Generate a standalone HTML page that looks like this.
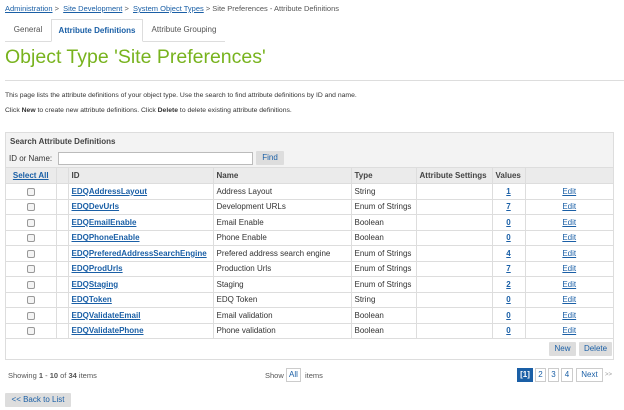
<!DOCTYPE html>
<html><head><meta charset="utf-8"><style>
*{margin:0;padding:0;box-sizing:border-box}
body{width:624px;height:410px;background:#fff;font-family:"Liberation Sans",Arial,sans-serif;font-size:8px;color:#333;position:relative;overflow:hidden}
a{color:#1a5fa6;text-decoration:underline}
.abs{position:absolute;white-space:nowrap}
.crumb{top:4px;left:5px;font-size:7.5px;color:#555}
.tab{position:absolute;top:19px;height:23px;line-height:22px;font-size:8px;color:#555;text-align:center}
.act{border:1px solid #ddd;border-bottom:1px solid #fff;font-weight:bold;color:#1a5fa6;background:#fff}
h1{position:absolute;left:5px;top:46px;font-size:19.5px;font-weight:normal;color:#78b31e;white-space:nowrap}
.box{position:absolute;left:5px;top:132px;width:609px;height:228px;border:1px solid #ddd;background:#fff}
table{border-collapse:collapse;position:absolute;left:0;top:34px;width:607px}
td,th{border:1px solid #ddd;height:15.5px;padding:0 3px;font-size:8px;text-align:left;white-space:nowrap}
th{background:#ebebeb;font-weight:bold;color:#444;height:16px}
tr td:first-child,tr th:first-child{border-left:none;text-align:center}
tr td:last-child,tr th:last-child{border-right:none;text-align:center}
td a{font-weight:bold}
.cb{display:inline-block;width:8px;height:8px;border:1px solid #999;border-radius:2px;background:#f4f4f4;vertical-align:middle}
.btn{position:absolute;background:#ddd;color:#1a5fa6;font-size:8px;text-align:center;border-radius:1px}
.pg{position:absolute;top:368px;height:14px;line-height:12px;border:1px solid #ccc;color:#1a5fa6;text-align:center;font-size:8px;background:#fff}
</style></head><body>
<div class="abs crumb"><a href="#">Administration</a> &gt; &nbsp;<a href="#">Site Development</a> &gt; &nbsp;<a href="#">System Object Types</a> &gt; Site Preferences - Attribute Definitions</div>
<div style="position:absolute;left:5px;top:41px;width:220px;height:1px;background:#ddd"></div>
<div class="tab" style="left:5px;width:46px">General</div>
<div class="tab act" style="left:51px;width:92px">Attribute Definitions</div>
<div class="tab" style="left:143px;width:82px">Attribute Grouping</div>
<h1>Object Type 'Site Preferences'</h1>
<div style="position:absolute;left:5px;top:80px;width:619px;height:1px;background:#ddd"></div>
<div class="abs" style="left:5px;top:92px;font-size:6.8px">This page lists the attribute definitions of your object type. Use the search to find attribute definitions by ID and name.</div>
<div class="abs" style="left:5px;top:107px;font-size:6.8px">Click <b>New</b> to create new attribute definitions. Click <b>Delete</b> to delete existing attribute definitions.</div>
<div class="box">
<div style="position:absolute;left:0;top:0;width:607px;height:34px;background:#f3f3f3"></div>
<div class="abs" style="left:4px;top:4px;font-weight:bold;color:#444">Search Attribute Definitions</div>
<div class="abs" style="left:3px;top:21px">ID or Name:</div>
<div style="position:absolute;left:52px;top:19px;width:195px;height:13px;border:1px solid #bbb;background:#fff"></div>
<div class="btn" style="left:250px;top:18px;width:28px;height:14px;line-height:14px">Find</div>
<table>
<tr><th style="width:50px"><a href="#">Select All</a></th><th style="width:12px"></th><th style="width:145px">ID</th><th style="width:138px">Name</th><th style="width:65px">Type</th><th style="width:76px">Attribute Settings</th><th style="width:33px">Values</th><th></th></tr>
<tr><td><span class="cb"></span></td><td></td><td><a href="#">EDQAddressLayout</a></td><td>Address Layout</td><td>String</td><td></td><td style="text-align:center"><a href="#">1</a></td><td><a href="#" style="font-weight:normal">Edit</a></td></tr>
<tr><td><span class="cb"></span></td><td></td><td><a href="#">EDQDevUrls</a></td><td>Development URLs</td><td>Enum of Strings</td><td></td><td style="text-align:center"><a href="#">7</a></td><td><a href="#" style="font-weight:normal">Edit</a></td></tr>
<tr><td><span class="cb"></span></td><td></td><td><a href="#">EDQEmailEnable</a></td><td>Email Enable</td><td>Boolean</td><td></td><td style="text-align:center"><a href="#">0</a></td><td><a href="#" style="font-weight:normal">Edit</a></td></tr>
<tr><td><span class="cb"></span></td><td></td><td><a href="#">EDQPhoneEnable</a></td><td>Phone Enable</td><td>Boolean</td><td></td><td style="text-align:center"><a href="#">0</a></td><td><a href="#" style="font-weight:normal">Edit</a></td></tr>
<tr><td><span class="cb"></span></td><td></td><td><a href="#">EDQPreferedAddressSearchEngine</a></td><td>Prefered address search engine</td><td>Enum of Strings</td><td></td><td style="text-align:center"><a href="#">4</a></td><td><a href="#" style="font-weight:normal">Edit</a></td></tr>
<tr><td><span class="cb"></span></td><td></td><td><a href="#">EDQProdUrls</a></td><td>Production Urls</td><td>Enum of Strings</td><td></td><td style="text-align:center"><a href="#">7</a></td><td><a href="#" style="font-weight:normal">Edit</a></td></tr>
<tr><td><span class="cb"></span></td><td></td><td><a href="#">EDQStaging</a></td><td>Staging</td><td>Enum of Strings</td><td></td><td style="text-align:center"><a href="#">2</a></td><td><a href="#" style="font-weight:normal">Edit</a></td></tr>
<tr><td><span class="cb"></span></td><td></td><td><a href="#">EDQToken</a></td><td>EDQ Token</td><td>String</td><td></td><td style="text-align:center"><a href="#">0</a></td><td><a href="#" style="font-weight:normal">Edit</a></td></tr>
<tr><td><span class="cb"></span></td><td></td><td><a href="#">EDQValidateEmail</a></td><td>Email validation</td><td>Boolean</td><td></td><td style="text-align:center"><a href="#">0</a></td><td><a href="#" style="font-weight:normal">Edit</a></td></tr>
<tr><td><span class="cb"></span></td><td></td><td><a href="#">EDQValidatePhone</a></td><td>Phone validation</td><td>Boolean</td><td></td><td style="text-align:center"><a href="#">0</a></td><td><a href="#" style="font-weight:normal">Edit</a></td></tr>
</table>
<div class="btn" style="left:543px;top:209px;width:27px;height:14px;line-height:14px">New</div>
<div class="btn" style="left:573px;top:209px;width:33px;height:14px;line-height:14px">Delete</div>
</div>
<div class="abs" style="left:8px;top:371px;font-size:7.5px;color:#555">Showing <b>1</b> - <b>10</b> of <b>34</b> items</div>
<div class="abs" style="left:265px;top:371px;font-size:7.5px;color:#555">Show</div>
<div class="pg" style="left:286px;top:368px;width:15px">All</div>
<div class="abs" style="left:305px;top:371px;font-size:7.5px;color:#555">items</div>
<div class="pg" style="left:517px;width:16px;background:#1a5fa6;color:#fff;border-color:#1a5fa6;font-weight:bold">[1]</div>
<div class="pg" style="left:535px;width:11px">2</div>
<div class="pg" style="left:548px;width:11px">3</div>
<div class="pg" style="left:561px;width:12px">4</div>
<div class="pg" style="left:576px;width:27px">Next</div>
<div class="abs" style="left:605px;top:372px;font-size:6px;color:#999">&gt;&gt;</div>
<div class="btn" style="left:5px;top:393px;width:66px;height:14px;line-height:14px">&lt;&lt; Back to List</div>
</body></html>
